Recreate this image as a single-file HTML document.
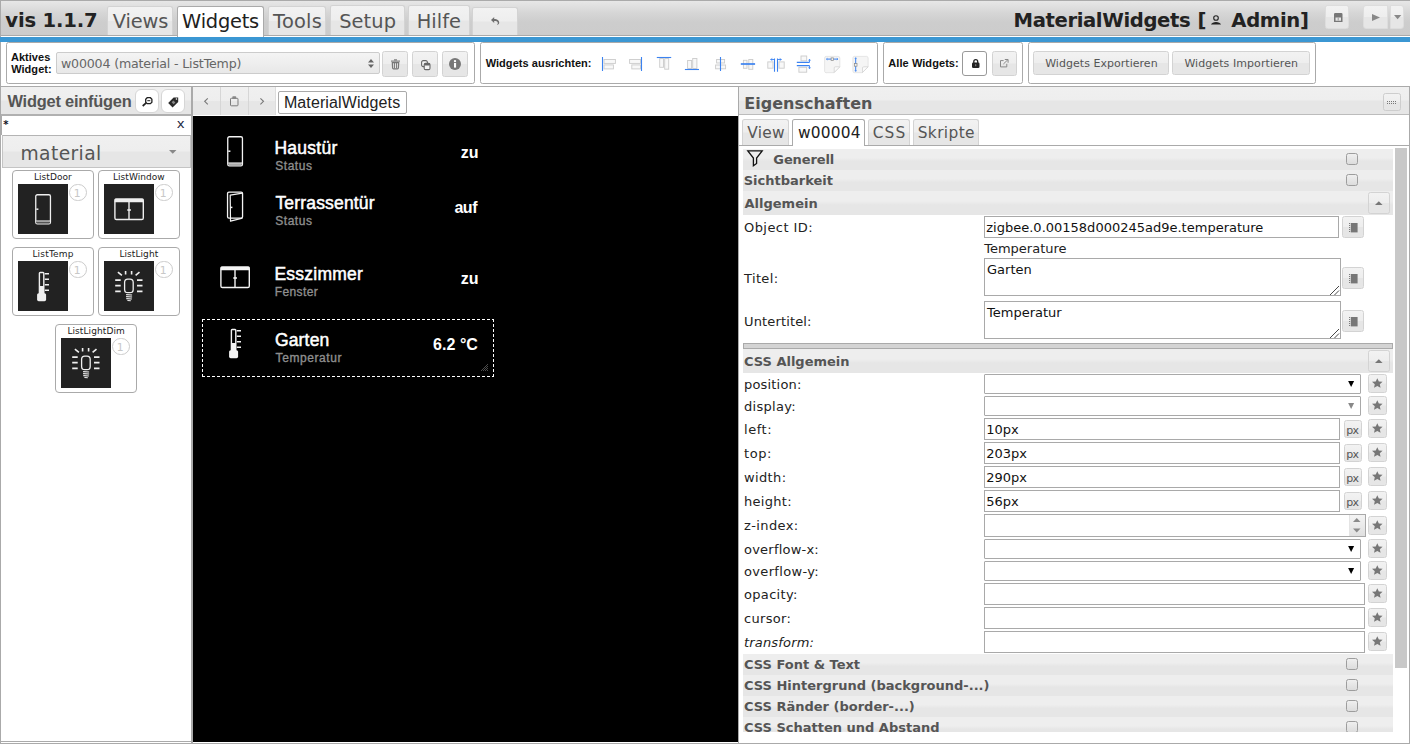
<!DOCTYPE html><html lang="de"><head><meta charset="utf-8"><title>vis</title><style>
*{box-sizing:border-box;margin:0;padding:0}
html,body{width:1410px;height:745px;overflow:hidden;background:#fff}
body{position:relative;font-family:"DejaVu Sans","Liberation Sans",sans-serif;font-size:13px;color:#222}
.a{position:absolute}
.t{position:absolute;white-space:nowrap;line-height:1}
.ar{font-family:"Liberation Sans",sans-serif}
.glass{background:linear-gradient(#f0f0f0 0,#eeeeee 48%,#e6e6e6 52%,#e6e6e6 100%)}
.btn{position:absolute;border:1px solid #d3d3d3;border-radius:2.5px;background:linear-gradient(#f2f2f2 0,#eeeeee 48%,#e6e6e6 52%,#e6e6e6 100%)}
.tab{position:absolute;border:1px solid #d3d3d3;border-bottom:none;border-radius:2.5px 2.5px 0 0;background:linear-gradient(#f2f2f2 0,#eeeeee 48%,#e6e6e6 52%,#e6e6e6 100%)}
.tab.on{background:#fff;border-color:#aaa}
.box{position:absolute;border:1px solid #aaa;border-radius:2.5px;background:#fff}
.inp{position:absolute;border:1px solid #a9a9a9;background:#fff}
.sec{position:absolute;left:743px;width:650px;background:linear-gradient(#eeeeee 0,#eeeeee 42%,#e6e6e6 58%,#e6e6e6 100%)}
.cb{position:absolute;width:12px;height:12px;border:1px solid #9d9d9d;border-radius:2.5px;background:linear-gradient(#efefef,#dcdcdc)}
svg{position:absolute;overflow:visible}
</style></head><body>
<div class="a" style="left:0;top:0;width:1410px;height:744px;border:1px solid #aaa;border-right:none"></div>
<div class="a" style="left:0;top:0;width:1410px;height:36px;border:1px solid #aaa;border-right:none;background:linear-gradient(#e7e7e7 0%,#d6d6d6 35%,#cdcdcd 62%,#cccccc 100%)"></div>
<div class="t" style="left:5.31px;top:11.30px;font-size:19.6px;color:#222;font-weight:bold;letter-spacing:-0.191px;">vis 1.1.7</div>
<div class="tab" style="left:107px;top:6px;width:66px;height:29px"></div>
<div class="t" style="left:112.81px;top:12.30px;font-size:19.4px;color:#555;letter-spacing:-0.149px;">Views</div>
<div class="tab on" style="left:177px;top:6px;width:87px;height:31px"></div>
<div class="t" style="left:182.12px;top:12.30px;font-size:19.4px;color:#212121;letter-spacing:-0.221px;">Widgets</div>
<div class="tab" style="left:268px;top:6px;width:58px;height:29px"></div>
<div class="t" style="left:273.10px;top:12.30px;font-size:19.4px;color:#555;letter-spacing:0.238px;">Tools</div>
<div class="tab" style="left:330px;top:5px;width:75px;height:30px"></div>
<div class="t" style="left:339.14px;top:12.30px;font-size:19.4px;color:#555;letter-spacing:0.119px;">Setup</div>
<div class="tab" style="left:408px;top:5px;width:62px;height:30px"></div>
<div class="t" style="left:416.66px;top:12.30px;font-size:19.4px;color:#555;letter-spacing:0.069px;">Hilfe</div>
<div class="tab" style="left:472px;top:7px;width:46px;height:28px"></div>
<svg style="left:490.7px;top:17px" width="8.6" height="8" viewBox="0 0 8.6 8"><path d="M0 3 L3.2 0 V1.9 C6.4 1.9 8.4 3.6 8.2 5.8 C8.1 6.9 7.4 7.6 6.6 8 L6.2 7.4 C6.9 6.8 7 6 6.6 5.2 C6 4.3 5 4.1 3.2 4.1 V6 Z" fill="#6e6e6e"/></svg>
<div class="t" style="left:1013.54px;top:11.30px;font-size:19.6px;color:#222;font-weight:bold;letter-spacing:-0.381px;">MaterialWidgets</div>
<div class="t" style="left:1197.53px;top:11.30px;font-size:19.6px;color:#222;font-weight:bold;">[</div>
<div class="t" style="left:1231.30px;top:11.30px;font-size:19.6px;color:#222;font-weight:bold;letter-spacing:-0.325px;">Admin</div>
<div class="t" style="left:1300.03px;top:11.30px;font-size:19.6px;color:#222;font-weight:bold;">]</div>
<svg style="left:1211px;top:14.5px" width="10" height="9.5" viewBox="0 0 10 9.5"><circle cx="5" cy="3" r="2.3" fill="none" stroke="#222" stroke-width="1.1"/><path d="M0 9.5 C1 6 9 6 10 9.5 Z" fill="#222"/></svg>
<div class="btn" style="left:1325px;top:5px;width:24px;height:24px;border-color:#ddd"></div>
<svg style="left:1333.5px;top:13px" width="8.5" height="9" viewBox="0 0 8.5 9"><path d="M0 1.2 A1.2 1.2 0 0 1 1.2 0 H7.3 A1.2 1.2 0 0 1 8.5 1.2 V9 H0 Z M1.5 4.5 V7.7 H7 V4.5 Z" fill="#777" fill-rule="evenodd"/><rect x="3.7" y="4.5" width="1" height="3" fill="#999"/></svg>
<div class="btn" style="left:1363px;top:5px;width:24.5px;height:24px;border-color:#ddd;border-radius:3px 0 0 3px"></div>
<svg style="left:1372px;top:14px" width="8" height="7" viewBox="0 0 8 7"><path d="M0 0 L8 3.5 L0 7 Z" fill="#888"/></svg>
<div class="btn" style="left:1389.7px;top:5px;width:14.5px;height:24px;border-color:#ddd;border-radius:0 3px 3px 0"></div>
<svg style="left:1393.7px;top:15px" width="7.3" height="4.2" viewBox="0 0 8 4.5"><path d="M0 0 H8 L4 4.5 Z" fill="#888"/></svg>
<div class="a" style="left:0;top:37px;width:1410px;height:5px;background:#3b97d3"></div>
<div class="box" style="left:6px;top:42px;width:469px;height:42px"></div>
<div class="t ar" style="left:10.92px;top:52.30px;font-size:11px;color:#111;font-weight:bold;letter-spacing:0.035px;">Aktives</div>
<div class="t ar" style="left:11.20px;top:64.30px;font-size:11px;color:#111;font-weight:bold;letter-spacing:0.040px;">Widget:</div>
<div class="a" style="left:56px;top:52px;width:323.5px;height:22px;border:1px solid #ccc;border-radius:2px;background:linear-gradient(#f4f4f4,#e8e8e8)"></div>
<div class="t" style="left:60.90px;top:58.30px;font-size:12.6px;color:#666;letter-spacing:-0.159px;">w00004 (material - ListTemp)</div>
<svg style="left:367.5px;top:59px" width="6" height="9" viewBox="0 0 6 9"><path d="M0 3.5 L3 0 L6 3.5 Z M0 5.5 L3 9 L6 5.5 Z" fill="#666"/></svg>
<div class="btn" style="left:382.3px;top:51px;width:25.5px;height:25.5px"></div>
<div class="btn" style="left:412.3px;top:51px;width:25.5px;height:25.5px"></div>
<div class="btn" style="left:442.4px;top:51px;width:25.5px;height:25.5px"></div>
<svg style="left:391px;top:59.4px" width="9" height="10.4" viewBox="0 0 9 10.4"><path d="M0 2.1 H9" stroke="#777" stroke-width="1.1"/><path d="M3 0.9 H6" stroke="#777" stroke-width="1.2"/><path d="M1.3 3.6 H7.7 L7.4 9 Q7.3 9.8 6.5 9.8 H2.5 Q1.7 9.8 1.6 9 Z" fill="#e4e4e4" stroke="#777" stroke-width="1.2"/><path d="M3.45 4 V9.4 M5.55 4 V9.4" stroke="#777" stroke-width="1"/></svg>
<svg style="left:421px;top:59.6px" width="9.6" height="10.2" viewBox="0 0 9.6 10.2"><rect x="0.6" y="0.6" width="5.8" height="6" rx="1.6" fill="#f4f4f4" stroke="#666" stroke-width="1.1"/><rect x="3.2" y="3.4" width="5.8" height="6.2" rx="1.4" fill="#f4f4f4" stroke="#666" stroke-width="1.1"/><rect x="3.2" y="3.4" width="5.8" height="2" rx="1" fill="#666"/></svg>
<svg style="left:449.3px;top:57.9px" width="12" height="12" viewBox="0 0 12 12"><circle cx="6" cy="6" r="6" fill="#787878"/><rect x="5" y="5" width="2.1" height="4.6" fill="#fff"/><circle cx="6" cy="3.1" r="1.2" fill="#fff"/></svg>
<div class="box" style="left:480px;top:42px;width:398px;height:42px"></div>
<div class="t ar" style="left:485.70px;top:58.30px;font-size:11px;color:#111;font-weight:bold;letter-spacing:0.042px;">Widgets ausrichten:</div>
<svg style="left:601px;top:56px" width="18" height="18" viewBox="0 0 18 18"><rect x="3" y="3.5" width="11.4" height="3.9" fill="#f8f8f8" stroke="#cbcbcb" stroke-width="0.9"/><rect x="3" y="8.9" width="9.4" height="4" fill="#f8f8f8" stroke="#cbcbcb" stroke-width="0.9"/><path d="M1.5 1 V15" stroke="#3b82f0" stroke-width="1.1"/></svg>
<svg style="left:628px;top:56px" width="18" height="18" viewBox="0 0 18 18"><rect x="1.6" y="3.5" width="10.9" height="3.9" fill="#f8f8f8" stroke="#cbcbcb" stroke-width="0.9"/><rect x="3.8" y="8.9" width="8.7" height="4" fill="#f8f8f8" stroke="#cbcbcb" stroke-width="0.9"/><path d="M13.5 1 V15" stroke="#3b82f0" stroke-width="1.1"/></svg>
<svg style="left:656px;top:56px" width="18" height="18" viewBox="0 0 18 18"><rect x="3.7" y="2.6" width="3.8" height="8.7" fill="#f8f8f8" stroke="#cbcbcb" stroke-width="0.9"/><rect x="8.7" y="2.6" width="4" height="10.6" fill="#f8f8f8" stroke="#cbcbcb" stroke-width="0.9"/><path d="M0.8 1.5 H15.2" stroke="#3b82f0" stroke-width="1.1"/></svg>
<svg style="left:684px;top:56px" width="18" height="18" viewBox="0 0 18 18"><rect x="3.6" y="4.5" width="4" height="8" fill="#f8f8f8" stroke="#cbcbcb" stroke-width="0.9"/><rect x="8.7" y="2.5" width="4.2" height="10" fill="#f8f8f8" stroke="#cbcbcb" stroke-width="0.9"/><path d="M0.9 13.5 H15" stroke="#3b82f0" stroke-width="1.1"/></svg>
<svg style="left:712px;top:56px" width="18" height="18" viewBox="0 0 18 18"><rect x="4.6" y="3.5" width="8" height="3.5" fill="#f8f8f8" stroke="#cbcbcb" stroke-width="0.9"/><rect x="3.6" y="9" width="10" height="3.8" fill="#f8f8f8" stroke="#cbcbcb" stroke-width="0.9"/><path d="M8.5 1 V15" stroke="#3b82f0" stroke-width="1.1"/></svg>
<svg style="left:740px;top:56px" width="18" height="18" viewBox="0 0 18 18"><rect x="3.4" y="4.3" width="3.6" height="8" fill="#f8f8f8" stroke="#cbcbcb" stroke-width="0.9"/><rect x="8.8" y="3.5" width="4" height="9.8" fill="#f8f8f8" stroke="#cbcbcb" stroke-width="0.9"/><path d="M0.8 8 H15.1" stroke="#3b82f0" stroke-width="1.7"/></svg>
<svg style="left:767px;top:56px" width="18" height="18" viewBox="0 0 18 18"><rect x="0.8" y="5.9" width="5.2" height="6.3" fill="#f8f8f8" stroke="#cbcbcb" stroke-width="0.9"/><rect x="12" y="5.9" width="5.2" height="6.3" fill="#f8f8f8" stroke="#cbcbcb" stroke-width="0.9"/><path d="M7.5 2.6 V15.8 M10.5 2.6 V15.8" stroke="#3b82f0" stroke-width="1.1"/><path d="M3.6 3.5 H7.5 M10.5 3.5 H14.4" stroke="#3b82f0" stroke-width="0.9"/><path d="M5.4 2.3 L3.6 3.5 L5.4 4.7 M12.6 2.3 L14.4 3.5 L12.6 4.7" fill="none" stroke="#3b82f0" stroke-width="0.7"/></svg>
<svg style="left:796px;top:55px" width="18" height="18" viewBox="0 0 18 18"><rect x="5" y="1" width="5.7" height="4.8" fill="#f8f8f8" stroke="#cbcbcb" stroke-width="0.9"/><rect x="2.9" y="12.3" width="7.8" height="4.9" fill="#f8f8f8" stroke="#cbcbcb" stroke-width="0.9"/><path d="M0.8 7.4 H13.5 M0.8 10.6 H13.5" stroke="#3b82f0" stroke-width="1.1"/><path d="M13.5 7.4 V4.4 M13.5 10.6 V13.6" stroke="#3b82f0" stroke-width="0.9"/><path d="M12.4 5.6 L13.5 4.2 L14.6 5.6 M12.4 12.4 L13.5 13.8 L14.6 12.4" fill="none" stroke="#3b82f0" stroke-width="0.7"/></svg>
<svg style="left:824px;top:55.5px" width="18" height="18" viewBox="0 0 18 18"><path d="M2.2 0.4 H14.200000000000001 A1.6 1.6 0 0 1 15.8 2 V10.8 L10.0 16.7 H2.2 A1.6 1.6 0 0 1 0.6000000000000001 15.1 V2 A1.6 1.6 0 0 1 2.2 0.4 Z" fill="#f5f5f5" stroke="#e0e0e0" stroke-width="0.8"/><path d="M15.8 10.8 H11.4 A1.2 1.2 0 0 0 10.200000000000001 12 V16.5 Z" fill="#fbfbfb" stroke="#cfcfcf" stroke-width="0.7"/><path d="M2.4 3.1 H14" stroke="#3b82f0" stroke-width="1"/><path d="M3.6 2.2 L2.4 3.1 L3.6 4 M12.8 2.2 L14 3.1 L12.8 4" fill="none" stroke="#3b82f0" stroke-width="0.6"/><rect x="7.1" y="1.9" width="2.4" height="2.5" fill="#f4f4f4" stroke="#888" stroke-width=".7"/></svg>
<svg style="left:852px;top:55.5px" width="18" height="18" viewBox="0 0 18 18"><path d="M2.5 0.4 H14.5 A1.6 1.6 0 0 1 16.1 2 V10.8 L10.299999999999999 16.7 H2.5 A1.6 1.6 0 0 1 0.8999999999999999 15.1 V2 A1.6 1.6 0 0 1 2.5 0.4 Z" fill="#f5f5f5" stroke="#e0e0e0" stroke-width="0.8"/><path d="M16.1 10.8 H11.7 A1.2 1.2 0 0 0 10.5 12 V16.5 Z" fill="#fbfbfb" stroke="#cfcfcf" stroke-width="0.7"/><path d="M3.7 1.7 V15.4" stroke="#3b82f0" stroke-width="1"/><path d="M2.8 2.9 L3.7 1.7 L4.6 2.9 M2.8 14.2 L3.7 15.4 L4.6 14.2" fill="none" stroke="#3b82f0" stroke-width="0.6"/><rect x="2.4" y="7.6" width="2.6" height="2.6" fill="#f4f4f4" stroke="#888" stroke-width=".7"/></svg>
<div class="box" style="left:883px;top:42px;width:140px;height:42px"></div>
<div class="t ar" style="left:888.33px;top:58.30px;font-size:11px;color:#111;font-weight:bold;letter-spacing:0.067px;">Alle Widgets:</div>
<div class="a" style="left:962px;top:51px;width:25px;height:25px;border:1px solid #999;border-radius:3px;background:#fff"></div>
<svg style="left:971.8px;top:58.9px" width="7.5" height="9" viewBox="0 0 7.5 9"><rect x="0" y="3.5" width="7.5" height="5.5" rx="1.3" fill="#222"/><path d="M1.8 4 V2.6 A1.95 1.95 0 0 1 5.7 2.6 V4" fill="none" stroke="#222" stroke-width="1.3"/><rect x="3.3" y="5.2" width="0.9" height="2" fill="#999"/></svg>
<div class="btn" style="left:991.5px;top:51px;width:25px;height:25px"></div>
<svg style="left:999.7px;top:59px" width="8.6" height="8.4" viewBox="0 0 8.6 8.4"><path d="M3.6 1.6 H0.5 V7.9 H6.8 V4.8" fill="none" stroke="#888" stroke-width="1"/><path d="M3.4 5 L7.8 0.8 M4.8 0.5 H8.1 V3.8" fill="none" stroke="#888" stroke-width="1"/></svg>
<div class="box" style="left:1028px;top:42px;width:288px;height:42px"></div>
<div class="btn" style="left:1033px;top:51px;width:136px;height:24px"></div>
<div class="t" style="left:1045.21px;top:58.30px;font-size:11px;color:#555;letter-spacing:0.034px;">Widgets Exportieren</div>
<div class="btn" style="left:1172px;top:51px;width:138px;height:24px"></div>
<div class="t" style="left:1184.41px;top:58.30px;font-size:11px;color:#555;letter-spacing:0.073px;">Widgets Importieren</div>
<div class="a" style="left:0;top:86px;width:192px;height:656px;border:1px solid #aaa;background:#fff"></div>
<div class="a glass" style="left:1px;top:87px;width:190px;height:29px;border-bottom:2px solid #b0b0b0"></div>
<div class="t ar" style="left:7.50px;top:93.30px;font-size:16.4px;color:#555;font-weight:bold;letter-spacing:-0.219px;">Widget einfügen</div>
<div class="a" style="left:135.3px;top:89.2px;width:23.4px;height:23.6px;border:1px solid #d6d6d6;border-radius:6px;background:#fff"></div>
<div class="a" style="left:161.3px;top:89.2px;width:23.4px;height:23.6px;border:1px solid #d6d6d6;border-radius:6px;background:#fff"></div>
<svg style="left:141.8px;top:96.7px" width="10.6" height="9.6" viewBox="0 0 10.6 9.6"><path d="M5.2 0.7 H8.4 L9.9 2.2 V5.2 L8.4 6.7 H5.2 L3.7 5.2 V2.2 Z" fill="#fff" stroke="#222" stroke-width="1.3"/><path d="M5.3 3.7 H8.3" stroke="#222" stroke-width="1"/><path d="M4.2 5.9 L0.7 9" stroke="#222" stroke-width="1.7"/></svg>
<svg style="left:167.7px;top:96.7px" width="10.6" height="10.6" viewBox="0 0 10.6 10.6"><path d="M5.6 0.4 H10.2 V5 L4.6 10.4 L0.2 6 Z" fill="#2a2a2a"/><circle cx="8.5" cy="2" r="0.8" fill="#fff"/><path d="M3.6 5.2 L5.6 7.2 L7.4 5.4 L5.4 3.4 Z" fill="#8a8a8a"/></svg>
<div class="a" style="left:1px;top:116px;width:1px;height:19px;background:#aaa"></div>
<div class="t" style="left:3.30px;top:120.30px;font-size:10px;color:#112;font-weight:bold;">*</div>
<div class="t ar" style="left:176.67px;top:117.30px;font-size:13.4px;color:#1a2540;transform:scaleX(1.1);transform-origin:0 0;">x</div>
<div class="a glass" style="left:2px;top:135px;width:189px;height:33px;border:1px solid #c4c4c4;border-top-color:#b4b4b4;border-radius:0"></div>
<div class="t" style="left:20.52px;top:145.30px;font-size:18.7px;color:#555;letter-spacing:0.384px;">material</div>
<svg style="left:168.7px;top:150px" width="7.5" height="3.8" viewBox="0 0 7.5 3.8"><path d="M0 0 H7.5 L3.75 3.8 Z" fill="#888"/></svg>
<div class="a" style="left:12px;top:170px;width:82px;height:69px;border:1px solid #aaa;border-radius:4px;background:#fff"></div>
<div class="t" style="left:33.90px;top:173.30px;font-size:9px;color:#222;letter-spacing:0.079px;">ListDoor</div>
<div class="a" style="left:18px;top:184px;width:50px;height:50px;background:#222"></div>
<svg style="left:27px;top:192.6px" width="32" height="32" viewBox="0 0 32 32"><rect x="8.75" y="1.75" width="14.7" height="29.1" rx="1.6" fill="none" stroke="#efefef" stroke-width="1.3"/><rect x="9.4" y="28.2" width="13.4" height="2.2" fill="#555"/><path d="M9.2 28 H23" stroke="#efefef" stroke-width="1.1"/><path d="M9.3 16.2 H11.4" stroke="#efefef" stroke-width="1.5"/></svg>
<div class="a" style="left:69.4px;top:184.3px;width:17.2px;height:17.2px;border:1px solid #ccc;border-radius:50%"></div>
<div class="t" style="left:73.81px;top:189.30px;font-size:10.8px;color:#c8c8c8;">1</div>
<div class="a" style="left:98px;top:170px;width:82px;height:69px;border:1px solid #aaa;border-radius:4px;background:#fff"></div>
<div class="t" style="left:113.00px;top:173.30px;font-size:9px;color:#222;letter-spacing:0.050px;">ListWindow</div>
<div class="a" style="left:104px;top:184px;width:50px;height:50px;background:#222"></div>
<svg style="left:113px;top:192.6px" width="32" height="32" viewBox="0 0 32 32"><rect x="1.9" y="6.1" width="28.4" height="20.4" rx="1.6" fill="none" stroke="#efefef" stroke-width="1.4"/><rect x="1.6" y="5.6" width="29" height="3.7" rx="0.8" fill="#efefef"/><path d="M16 9 V26.5" stroke="#efefef" stroke-width="1.4"/><path d="M14.3 17 H17.9" stroke="#efefef" stroke-width="1.6"/></svg>
<div class="a" style="left:155.4px;top:184.3px;width:17.2px;height:17.2px;border:1px solid #ccc;border-radius:50%"></div>
<div class="t" style="left:159.81px;top:189.30px;font-size:10.8px;color:#c8c8c8;">1</div>
<div class="a" style="left:12px;top:247px;width:82px;height:69px;border:1px solid #aaa;border-radius:4px;background:#fff"></div>
<div class="t" style="left:32.40px;top:250.30px;font-size:9px;color:#222;letter-spacing:0.194px;">ListTemp</div>
<div class="a" style="left:18px;top:261px;width:50px;height:50px;background:#222"></div>
<svg style="left:27px;top:269.6px" width="32" height="32" viewBox="0 0 32 32"><path d="M11.7 24.5 V3.2 A1.5 1.5 0 0 1 13.2 1.7 H16 A1.5 1.5 0 0 1 17.5 3.2 V24.5 Z M13.1 3.3 V16.1 H16.1 V3.3 Z" fill-rule="evenodd" fill="#efefef"/><rect x="10.1" y="23.2" width="9" height="8" rx="1.6" fill="#efefef"/><path d="M17.8 3.8 H22 M17.8 9.2 H22 M17.8 14.7 H22 M17.8 20.3 H22" stroke="#efefef" stroke-width="1.4"/></svg>
<div class="a" style="left:69.4px;top:261.3px;width:17.2px;height:17.2px;border:1px solid #ccc;border-radius:50%"></div>
<div class="t" style="left:73.81px;top:266.30px;font-size:10.8px;color:#c8c8c8;">1</div>
<div class="a" style="left:98px;top:247px;width:82px;height:69px;border:1px solid #aaa;border-radius:4px;background:#fff"></div>
<div class="t" style="left:119.40px;top:250.30px;font-size:9px;color:#222;letter-spacing:0.078px;">ListLight</div>
<div class="a" style="left:104px;top:261px;width:50px;height:50px;background:#222"></div>
<svg style="left:113px;top:269.6px" width="32" height="32" viewBox="0 0 32 32"><rect x="11.6" y="9.1" width="8.6" height="13.6" rx="3.2" fill="none" stroke="#efefef" stroke-width="1.3"/><path d="M13.1 24.6 L19.1 25 M13.1 26.6 L19.1 27 M13.3 28.6 L18.9 29 M14.4 30.5 L17.8 30.8" stroke="#efefef" stroke-width="1.1"/><path d="M12.6 0.9 V4.4 M18.6 0.9 V4.4 M4.9 2.1 L8.9 5.4 M26.5 2.1 L22.6 5.4 M2.2 10.1 H7.7 M2.2 15.6 H7.7 M2.2 21.4 H7.7 M24 10.1 H29.5 M24 15.6 H29.5 M24 21.4 H29.5" stroke="#efefef" stroke-width="1.6"/></svg>
<div class="a" style="left:155.4px;top:261.3px;width:17.2px;height:17.2px;border:1px solid #ccc;border-radius:50%"></div>
<div class="t" style="left:159.81px;top:266.30px;font-size:10.8px;color:#c8c8c8;">1</div>
<div class="a" style="left:55px;top:324px;width:82px;height:69px;border:1px solid #aaa;border-radius:4px;background:#fff"></div>
<div class="t" style="left:67.40px;top:327.30px;font-size:9px;color:#222;letter-spacing:0.089px;">ListLightDim</div>
<div class="a" style="left:61px;top:338px;width:50px;height:50px;background:#222"></div>
<svg style="left:70px;top:346.6px" width="32" height="32" viewBox="0 0 32 32"><rect x="11.6" y="9.1" width="8.6" height="13.6" rx="3.2" fill="none" stroke="#efefef" stroke-width="1.3"/><path d="M13.1 24.6 L19.1 25 M13.1 26.6 L19.1 27 M13.3 28.6 L18.9 29 M14.4 30.5 L17.8 30.8" stroke="#efefef" stroke-width="1.1"/><path d="M12.6 0.9 V4.4 M18.6 0.9 V4.4 M4.9 2.1 L8.9 5.4 M26.5 2.1 L22.6 5.4 M2.2 10.1 H7.7 M2.2 15.6 H7.7 M2.2 21.4 H7.7 M24 10.1 H29.5 M24 15.6 H29.5 M24 21.4 H29.5" stroke="#efefef" stroke-width="1.6"/></svg>
<div class="a" style="left:112.4px;top:338.3px;width:17.2px;height:17.2px;border:1px solid #ccc;border-radius:50%"></div>
<div class="t" style="left:116.81px;top:343.30px;font-size:10.8px;color:#c8c8c8;">1</div>
<div class="a" style="left:192px;top:86px;width:547px;height:30px;background:#fff;border-top:1px solid #aaa;border-left:1px solid #aaa"></div>
<div class="a glass" style="left:193px;top:87px;width:82.5px;height:28px"></div>
<div class="a" style="left:219.5px;top:87px;width:1.5px;height:28px;background:#d6d6d6"></div>
<div class="a" style="left:247.5px;top:87px;width:1.5px;height:28px;background:#d6d6d6"></div>
<div class="a" style="left:275px;top:87px;width:1px;height:28px;background:#ddd"></div>
<svg style="left:204.2px;top:98.2px" width="4.2" height="6.6" viewBox="0 0 4.2 6.6"><path d="M3.8 0.3 L0.7 3.3 L3.8 6.3" fill="none" stroke="#777" stroke-width="1.1"/></svg>
<svg style="left:259.5px;top:98.2px" width="4.2" height="6.6" viewBox="0 0 4.2 6.6"><path d="M0.4 0.3 L3.5 3.3 L0.4 6.3" fill="none" stroke="#777" stroke-width="1.1"/></svg>
<svg style="left:229.5px;top:96.2px" width="8.5" height="10.3" viewBox="0 0 8.5 10.3"><rect x="0.5" y="2.3" width="7.5" height="7.5" rx="0.8" fill="none" stroke="#7a7a7a" stroke-width="1"/><rect x="2.3" y="0.3" width="3.9" height="2.6" rx="0.8" fill="#888"/></svg>
<div class="a" style="left:278px;top:90.5px;width:129px;height:23.5px;border:1px solid #aaa;border-radius:2px;background:#fff"></div>
<div class="t ar" style="left:283.92px;top:95.30px;font-size:16px;color:#222;letter-spacing:0.109px;">MaterialWidgets</div>
<div class="a" style="left:193px;top:116px;width:545px;height:626px;background:#000"></div>
<div class="a" style="left:191px;top:86px;width:2px;height:658px;background:#aaa"></div>
<div class="t ar" style="left:274.40px;top:140.30px;font-size:17.5px;color:#fff;letter-spacing:0.269px;-webkit-text-stroke:0.5px #fff;">Haustür</div>
<div class="t ar" style="left:275.26px;top:160.30px;font-size:12px;color:#8e8e8e;letter-spacing:0.528px;-webkit-text-stroke:0.35px #8e8e8e;">Status</div>
<div class="t ar" style="left:460.66px;top:145.30px;font-size:16px;color:#fff;font-weight:bold;letter-spacing:0.120px;">zu</div>
<svg style="left:219px;top:134.8px" width="32" height="32" viewBox="0 0 32 32"><rect x="8.75" y="1.75" width="14.7" height="29.1" rx="1.6" fill="none" stroke="#f4f4f4" stroke-width="1.3"/><rect x="9.4" y="28.2" width="13.4" height="2.2" fill="#aaa"/><path d="M9.2 28 H23" stroke="#f4f4f4" stroke-width="1.1"/><path d="M9.3 16.2 H11.4" stroke="#f4f4f4" stroke-width="1.5"/></svg>
<div class="t ar" style="left:275.45px;top:195.30px;font-size:17.5px;color:#fff;letter-spacing:0.173px;-webkit-text-stroke:0.5px #fff;">Terrassentür</div>
<div class="t ar" style="left:275.26px;top:215.30px;font-size:12px;color:#8e8e8e;letter-spacing:0.528px;-webkit-text-stroke:0.35px #8e8e8e;">Status</div>
<div class="t ar" style="left:454.42px;top:200.30px;font-size:16px;color:#fff;font-weight:bold;letter-spacing:-0.460px;">auf</div>
<svg style="left:219px;top:189.6px" width="32" height="32" viewBox="0 0 32 32"><rect x="8.55" y="2.05" width="15" height="26" rx="1.4" fill="none" stroke="#f4f4f4" stroke-width="1.3"/><path d="M23.4 3.1 L11.2 5.2 L11.5 31.2 L23.4 28.2" fill="none" stroke="#f4f4f4" stroke-width="1.2" stroke-linejoin="round"/><path d="M11.5 17.4 H13.4" stroke="#f4f4f4" stroke-width="1.5"/></svg>
<div class="t ar" style="left:274.40px;top:266.30px;font-size:17.5px;color:#fff;letter-spacing:0.252px;-webkit-text-stroke:0.5px #fff;">Esszimmer</div>
<div class="t ar" style="left:274.84px;top:286.30px;font-size:12px;color:#8e8e8e;letter-spacing:0.370px;-webkit-text-stroke:0.35px #8e8e8e;">Fenster</div>
<div class="t ar" style="left:460.66px;top:271.30px;font-size:16px;color:#fff;font-weight:bold;letter-spacing:0.120px;">zu</div>
<svg style="left:219px;top:260.8px" width="32" height="32" viewBox="0 0 32 32"><rect x="1.9" y="6.1" width="28.4" height="20.4" rx="1.6" fill="none" stroke="#f4f4f4" stroke-width="1.4"/><rect x="1.6" y="5.6" width="29" height="3.7" rx="0.8" fill="#f4f4f4"/><path d="M16 9 V26.5" stroke="#f4f4f4" stroke-width="1.4"/><path d="M14.3 17 H17.9" stroke="#f4f4f4" stroke-width="1.6"/></svg>
<div class="t ar" style="left:274.93px;top:332.30px;font-size:17.5px;color:#fff;letter-spacing:0.170px;-webkit-text-stroke:0.5px #fff;">Garten</div>
<div class="t ar" style="left:275.56px;top:352.30px;font-size:12px;color:#8e8e8e;letter-spacing:0.584px;-webkit-text-stroke:0.35px #8e8e8e;">Temperatur</div>
<div class="t ar" style="left:433.04px;top:337.30px;font-size:16px;color:#fff;font-weight:bold;letter-spacing:0.044px;">6.2 °C</div>
<svg style="left:219px;top:326.7px" width="32" height="32" viewBox="0 0 32 32"><path d="M11.7 24.5 V3.2 A1.5 1.5 0 0 1 13.2 1.7 H16 A1.5 1.5 0 0 1 17.5 3.2 V24.5 Z M13.1 3.3 V16.1 H16.1 V3.3 Z" fill-rule="evenodd" fill="#f4f4f4"/><rect x="10.1" y="23.2" width="9" height="8" rx="1.6" fill="#f4f4f4"/><path d="M17.8 3.8 H22 M17.8 9.2 H22 M17.8 14.7 H22 M17.8 20.3 H22" stroke="#f4f4f4" stroke-width="1.4"/></svg>
<svg style="left:202px;top:319px" width="292" height="58" viewBox="0 0 292 58" shape-rendering="crispEdges"><path d="M0 0.5 H292 M0 57.5 H292" stroke="#fff" stroke-width="1" stroke-dasharray="3 2"/><path d="M0.5 0 V58 M291.5 0 V58" stroke="#fff" stroke-width="1" stroke-dasharray="3 2"/></svg>
<svg style="left:481px;top:363px" width="8" height="8" viewBox="0 0 8 8" fill="#4a4a4a" shape-rendering="crispEdges"><rect x="0" y="7" width="1" height="1"/><rect x="1" y="6" width="1" height="1"/><rect x="2" y="5" width="1" height="1"/><rect x="2" y="7" width="1" height="1"/><rect x="3" y="4" width="1" height="1"/><rect x="3" y="6" width="1" height="1"/><rect x="4" y="3" width="1" height="1"/><rect x="4" y="5" width="1" height="1"/><rect x="4" y="7" width="1" height="1"/><rect x="5" y="2" width="1" height="1"/><rect x="5" y="4" width="1" height="1"/><rect x="5" y="6" width="1" height="1"/><rect x="6" y="1" width="1" height="1"/><rect x="6" y="3" width="1" height="1"/><rect x="6" y="5" width="1" height="1"/><rect x="6" y="7" width="1" height="1"/></svg>
<div class="a" style="left:738px;top:86px;width:672px;height:658px;border:1px solid #aaa;background:#fff"></div>
<div class="a glass" style="left:739px;top:87px;width:670px;height:28px;border-bottom:1px solid #bcbcbc"></div>
<div class="t" style="left:744.31px;top:96.30px;font-size:16px;color:#555;font-weight:bold;">Eigenschaften</div>
<div class="btn" style="left:1383px;top:93px;width:18px;height:18px;border-color:#cdcdcd"></div>
<div class="a" style="left:1387px;top:101px;width:9px;height:1px;background:repeating-linear-gradient(90deg,#777 0,#777 1px,transparent 1px,transparent 2px)"></div>
<div class="a" style="left:1387px;top:103px;width:9px;height:1px;background:repeating-linear-gradient(90deg,#777 0,#777 1px,transparent 1px,transparent 2px)"></div>
<div class="a" style="left:739px;top:145px;width:670px;height:1px;background:#aaa"></div>
<div class="tab" style="left:742px;top:119px;width:47px;height:26px"></div>
<div class="t" style="left:747.35px;top:126.30px;font-size:15.4px;color:#555;letter-spacing:0.224px;">View</div>
<div class="tab on" style="left:792px;top:119px;width:73px;height:27px"></div>
<div class="t" style="left:797.88px;top:126.30px;font-size:15.4px;color:#212121;letter-spacing:0.223px;">w00004</div>
<div class="tab" style="left:868px;top:119px;width:42px;height:26px"></div>
<div class="t" style="left:872.65px;top:126.30px;font-size:15.4px;color:#555;letter-spacing:1.178px;">CSS</div>
<div class="tab" style="left:913px;top:119px;width:66px;height:26px"></div>
<div class="t" style="left:917.70px;top:126.30px;font-size:15.4px;color:#555;letter-spacing:0.380px;">Skripte</div>
<div class="sec" style="top:149px;height:21px"></div>
<div class="t" style="left:773.35px;top:153.30px;font-size:13px;color:#555;font-weight:bold;letter-spacing:-0.106px;">Generell</div>
<div class="cb" style="left:1346px;top:153px"></div>
<svg style="left:747px;top:150.4px" width="16" height="16.6" viewBox="0 0 16 16.6"><path d="M0.8 0.8 H15.2 L9.6 8 V13.4 L6.4 15.8 V8 Z" fill="none" stroke="#111" stroke-width="1.3" stroke-linejoin="miter"/></svg>
<div class="sec" style="top:170px;height:21px"></div>
<div class="t" style="left:743.69px;top:174.30px;font-size:13px;color:#555;font-weight:bold;">Sichtbarkeit</div>
<div class="cb" style="left:1346px;top:174px"></div>
<div class="sec" style="top:191px;height:24px"></div>
<div class="t" style="left:744.53px;top:197.30px;font-size:13px;color:#555;font-weight:bold;">Allgemein</div>
<div class="btn" style="left:1368px;top:192px;width:22px;height:22px"></div>
<svg style="left:1374.7px;top:200.7px" width="7.6" height="4.2" viewBox="0 0 8 4"><path d="M0 4 H8 L4 0 Z" fill="#777"/></svg>
<div class="t" style="left:744.00px;top:221.30px;font-size:13px;color:#222;letter-spacing:0.436px;">Object ID:</div>
<div class="inp" style="left:984px;top:216px;width:355px;height:22px"></div>
<div class="t" style="top:221.30px;font-size:13px;color:#111;left:986.3px;">zigbee.0.00158d000245ad9e.temperature</div>
<div class="btn" style="left:1342px;top:216px;width:22px;height:22px"></div>
<svg style="left:1348.8px;top:222.5px" width="8.6" height="9.4" viewBox="0 0 8.6 9.4"><rect x="1.8" y="0" width="6.8" height="9.4" fill="#777"/><path d="M0.6 0 V9.4" stroke="#777" stroke-width="1.1" stroke-dasharray="1 1"/></svg>
<div class="t" style="top:242.30px;font-size:13px;color:#222;left:984.2px;">Temperature</div>
<div class="t" style="left:744.00px;top:272.30px;font-size:13px;color:#222;letter-spacing:0.371px;">Titel:</div>
<div class="inp" style="left:984px;top:258px;width:357px;height:38px"></div>
<div class="t" style="top:263.30px;font-size:13px;color:#111;left:987px;">Garten</div>
<svg style="left:1330px;top:285.5px" width="9" height="9" viewBox="0 0 9 9"><path d="M0 9 L9 0 M4.5 9 L9 4.5" stroke="#333" stroke-width="0.9"/></svg>
<div class="btn" style="left:1342px;top:267px;width:22px;height:22px"></div>
<svg style="left:1348.8px;top:273.5px" width="8.6" height="9.4" viewBox="0 0 8.6 9.4"><rect x="1.8" y="0" width="6.8" height="9.4" fill="#777"/><path d="M0.6 0 V9.4" stroke="#777" stroke-width="1.1" stroke-dasharray="1 1"/></svg>
<div class="t" style="left:744.00px;top:315.30px;font-size:13px;color:#222;letter-spacing:0.142px;">Untertitel:</div>
<div class="inp" style="left:984px;top:301px;width:357px;height:38px"></div>
<div class="t" style="top:306.30px;font-size:13px;color:#111;left:987px;">Temperatur</div>
<svg style="left:1330px;top:328.5px" width="9" height="9" viewBox="0 0 9 9"><path d="M0 9 L9 0 M4.5 9 L9 4.5" stroke="#333" stroke-width="0.9"/></svg>
<div class="btn" style="left:1342px;top:310px;width:22px;height:22px"></div>
<svg style="left:1348.8px;top:316.5px" width="8.6" height="9.4" viewBox="0 0 8.6 9.4"><rect x="1.8" y="0" width="6.8" height="9.4" fill="#777"/><path d="M0.6 0 V9.4" stroke="#777" stroke-width="1.1" stroke-dasharray="1 1"/></svg>
<div class="a" style="left:743px;top:343px;width:650px;height:6px;background:#d4d4d4;border:1px solid #aaa"></div>
<div class="sec" style="top:349px;height:24px"></div>
<div class="t" style="left:743.95px;top:355.30px;font-size:13px;color:#555;font-weight:bold;">CSS Allgemein</div>
<div class="btn" style="left:1368px;top:350px;width:22px;height:22px"></div>
<svg style="left:1374.7px;top:358.7px" width="7.6" height="4.2" viewBox="0 0 8 4"><path d="M0 4 H8 L4 0 Z" fill="#777"/></svg>
<div class="t" style="left:744.00px;top:378.30px;font-size:13px;color:#222;letter-spacing:0.183px;">position:</div>
<div class="inp" style="left:984px;top:374px;width:377px;height:20px;border-radius:1px"></div>
<svg style="left:1348px;top:380.8px" width="6.3" height="6" viewBox="0 0 7 7"><path d="M0 0 H7 L3.5 7 Z" fill="#000"/></svg>
<div class="btn" style="left:1368px;top:374px;width:19px;height:19px"></div>
<svg style="left:1372.2px;top:378px" width="10.6" height="10" viewBox="0 0 11 10"><path d="M5.5 0 L7.1 3.4 L11 3.8 L8.1 6.3 L8.9 10 L5.5 8.1 L2.1 10 L2.9 6.3 L0 3.8 L3.9 3.4 Z" fill="#777"/></svg>
<div class="t" style="left:744.00px;top:400.30px;font-size:13px;color:#222;letter-spacing:0.300px;">display:</div>
<div class="inp" style="left:984px;top:396px;width:377px;height:20px;border-radius:1px"></div>
<svg style="left:1348px;top:402.8px" width="6.3" height="6" viewBox="0 0 7 7"><path d="M0 0 H7 L3.5 7 Z" fill="#888"/></svg>
<div class="btn" style="left:1368px;top:396px;width:19px;height:19px"></div>
<svg style="left:1372.2px;top:400px" width="10.6" height="10" viewBox="0 0 11 10"><path d="M5.5 0 L7.1 3.4 L11 3.8 L8.1 6.3 L8.9 10 L5.5 8.1 L2.1 10 L2.9 6.3 L0 3.8 L3.9 3.4 Z" fill="#777"/></svg>
<div class="t" style="left:744.00px;top:423.30px;font-size:13px;color:#222;letter-spacing:0.520px;">left:</div>
<div class="inp" style="left:984px;top:418px;width:356px;height:22px"></div>
<div class="t" style="top:423.30px;font-size:13px;color:#111;left:986.3px;">10px</div>
<div class="btn" style="left:1344px;top:420px;width:18px;height:18px"></div>
<div class="t" style="left:1346.31px;top:425.30px;font-size:11px;color:#555;letter-spacing:-0.855px;">px</div>
<div class="btn" style="left:1368px;top:419px;width:19px;height:19px"></div>
<svg style="left:1372.2px;top:423px" width="10.6" height="10" viewBox="0 0 11 10"><path d="M5.5 0 L7.1 3.4 L11 3.8 L8.1 6.3 L8.9 10 L5.5 8.1 L2.1 10 L2.9 6.3 L0 3.8 L3.9 3.4 Z" fill="#777"/></svg>
<div class="t" style="left:744.00px;top:447.30px;font-size:13px;color:#222;letter-spacing:0.607px;">top:</div>
<div class="inp" style="left:984px;top:442px;width:356px;height:22px"></div>
<div class="t" style="top:447.30px;font-size:13px;color:#111;left:986.3px;">203px</div>
<div class="btn" style="left:1344px;top:444px;width:18px;height:18px"></div>
<div class="t" style="left:1346.31px;top:449.30px;font-size:11px;color:#555;letter-spacing:-0.855px;">px</div>
<div class="btn" style="left:1368px;top:443px;width:19px;height:19px"></div>
<svg style="left:1372.2px;top:447px" width="10.6" height="10" viewBox="0 0 11 10"><path d="M5.5 0 L7.1 3.4 L11 3.8 L8.1 6.3 L8.9 10 L5.5 8.1 L2.1 10 L2.9 6.3 L0 3.8 L3.9 3.4 Z" fill="#777"/></svg>
<div class="t" style="left:744.00px;top:471.30px;font-size:13px;color:#222;letter-spacing:0.365px;">width:</div>
<div class="inp" style="left:984px;top:466px;width:356px;height:22px"></div>
<div class="t" style="top:471.30px;font-size:13px;color:#111;left:986.3px;">290px</div>
<div class="btn" style="left:1344px;top:468px;width:18px;height:18px"></div>
<div class="t" style="left:1346.31px;top:473.30px;font-size:11px;color:#555;letter-spacing:-0.855px;">px</div>
<div class="btn" style="left:1368px;top:467px;width:19px;height:19px"></div>
<svg style="left:1372.2px;top:471px" width="10.6" height="10" viewBox="0 0 11 10"><path d="M5.5 0 L7.1 3.4 L11 3.8 L8.1 6.3 L8.9 10 L5.5 8.1 L2.1 10 L2.9 6.3 L0 3.8 L3.9 3.4 Z" fill="#777"/></svg>
<div class="t" style="left:744.00px;top:495.30px;font-size:13px;color:#222;letter-spacing:0.295px;">height:</div>
<div class="inp" style="left:984px;top:490px;width:356px;height:22px"></div>
<div class="t" style="top:495.30px;font-size:13px;color:#111;left:986.3px;">56px</div>
<div class="btn" style="left:1344px;top:492px;width:18px;height:18px"></div>
<div class="t" style="left:1346.31px;top:497.30px;font-size:11px;color:#555;letter-spacing:-0.855px;">px</div>
<div class="btn" style="left:1368px;top:491px;width:19px;height:19px"></div>
<svg style="left:1372.2px;top:495px" width="10.6" height="10" viewBox="0 0 11 10"><path d="M5.5 0 L7.1 3.4 L11 3.8 L8.1 6.3 L8.9 10 L5.5 8.1 L2.1 10 L2.9 6.3 L0 3.8 L3.9 3.4 Z" fill="#777"/></svg>
<div class="t" style="left:744.00px;top:519.30px;font-size:13px;color:#222;letter-spacing:0.383px;">z-index:</div>
<div class="inp" style="left:984px;top:514px;width:382px;height:23px"></div>
<div class="btn" style="left:1368px;top:516px;width:19px;height:19px"></div>
<svg style="left:1372.2px;top:520px" width="10.6" height="10" viewBox="0 0 11 10"><path d="M5.5 0 L7.1 3.4 L11 3.8 L8.1 6.3 L8.9 10 L5.5 8.1 L2.1 10 L2.9 6.3 L0 3.8 L3.9 3.4 Z" fill="#777"/></svg>
<div class="a" style="left:1348.5px;top:515px;width:16.5px;height:21px;background:linear-gradient(#f4f4f4,#e0e0e0);border-left:1px solid #e4e4e4"></div>
<svg style="left:1352.8px;top:518.3px" width="7.5" height="14.5" viewBox="0 0 7.5 14.5"><path d="M0 3.9 H7.5 L3.75 0 Z M0 10.6 H7.5 L3.75 14.5 Z" fill="#8a8a8a"/></svg>
<div class="t" style="left:744.00px;top:543.30px;font-size:13px;color:#222;letter-spacing:0.222px;">overflow-x:</div>
<div class="inp" style="left:984px;top:539px;width:377px;height:20px;border-radius:1px"></div>
<svg style="left:1348px;top:545.8px" width="6.3" height="6" viewBox="0 0 7 7"><path d="M0 0 H7 L3.5 7 Z" fill="#000"/></svg>
<div class="btn" style="left:1368px;top:539px;width:19px;height:19px"></div>
<svg style="left:1372.2px;top:543px" width="10.6" height="10" viewBox="0 0 11 10"><path d="M5.5 0 L7.1 3.4 L11 3.8 L8.1 6.3 L8.9 10 L5.5 8.1 L2.1 10 L2.9 6.3 L0 3.8 L3.9 3.4 Z" fill="#777"/></svg>
<div class="t" style="left:744.00px;top:565.30px;font-size:13px;color:#222;letter-spacing:0.339px;">overflow-y:</div>
<div class="inp" style="left:984px;top:561px;width:377px;height:20px;border-radius:1px"></div>
<svg style="left:1348px;top:567.8px" width="6.3" height="6" viewBox="0 0 7 7"><path d="M0 0 H7 L3.5 7 Z" fill="#000"/></svg>
<div class="btn" style="left:1368px;top:561px;width:19px;height:19px"></div>
<svg style="left:1372.2px;top:565px" width="10.6" height="10" viewBox="0 0 11 10"><path d="M5.5 0 L7.1 3.4 L11 3.8 L8.1 6.3 L8.9 10 L5.5 8.1 L2.1 10 L2.9 6.3 L0 3.8 L3.9 3.4 Z" fill="#777"/></svg>
<div class="t" style="left:744.00px;top:588.30px;font-size:13px;color:#222;letter-spacing:0.320px;">opacity:</div>
<div class="inp" style="left:984px;top:583px;width:381px;height:22px"></div>
<div class="btn" style="left:1368px;top:584px;width:19px;height:19px"></div>
<svg style="left:1372.2px;top:588px" width="10.6" height="10" viewBox="0 0 11 10"><path d="M5.5 0 L7.1 3.4 L11 3.8 L8.1 6.3 L8.9 10 L5.5 8.1 L2.1 10 L2.9 6.3 L0 3.8 L3.9 3.4 Z" fill="#777"/></svg>
<div class="t" style="left:744.00px;top:612.30px;font-size:13px;color:#222;letter-spacing:0.330px;">cursor:</div>
<div class="inp" style="left:984px;top:607px;width:381px;height:22px"></div>
<div class="btn" style="left:1368px;top:608px;width:19px;height:19px"></div>
<svg style="left:1372.2px;top:612px" width="10.6" height="10" viewBox="0 0 11 10"><path d="M5.5 0 L7.1 3.4 L11 3.8 L8.1 6.3 L8.9 10 L5.5 8.1 L2.1 10 L2.9 6.3 L0 3.8 L3.9 3.4 Z" fill="#777"/></svg>
<div class="t" style="left:744.00px;top:636.30px;font-size:13px;color:#222;font-style:italic;letter-spacing:0.169px;">transform:</div>
<div class="inp" style="left:984px;top:631px;width:381px;height:22px"></div>
<div class="btn" style="left:1368px;top:632px;width:19px;height:19px"></div>
<svg style="left:1372.2px;top:636px" width="10.6" height="10" viewBox="0 0 11 10"><path d="M5.5 0 L7.1 3.4 L11 3.8 L8.1 6.3 L8.9 10 L5.5 8.1 L2.1 10 L2.9 6.3 L0 3.8 L3.9 3.4 Z" fill="#777"/></svg>
<div class="sec" style="top:654px;height:21px"></div>
<div class="t" style="left:743.95px;top:658.30px;font-size:13px;color:#555;font-weight:bold;">CSS Font &amp; Text</div>
<div class="cb" style="left:1346px;top:658px"></div>
<div class="sec" style="top:675px;height:21px"></div>
<div class="t" style="left:743.95px;top:679.30px;font-size:13px;color:#555;font-weight:bold;">CSS Hintergrund (background-...)</div>
<div class="cb" style="left:1346px;top:679px"></div>
<div class="sec" style="top:696px;height:21px"></div>
<div class="t" style="left:743.95px;top:700.30px;font-size:13px;color:#555;font-weight:bold;">CSS Ränder (border-...)</div>
<div class="cb" style="left:1346px;top:700px"></div>
<div class="a" style="left:0;top:717px;width:1403px;height:15px;overflow:hidden">
<div class="sec" style="top:0;height:21px"></div>
<div class="t" style="left:743.95px;top:4.30px;font-size:13px;color:#555;font-weight:bold;">CSS Schatten und Abstand</div>
<div class="cb" style="left:1346px;top:4px"></div></div>
<div class="a" style="left:1395px;top:148px;width:12px;height:520px;background:#c8c8c8"></div>
</body></html>
